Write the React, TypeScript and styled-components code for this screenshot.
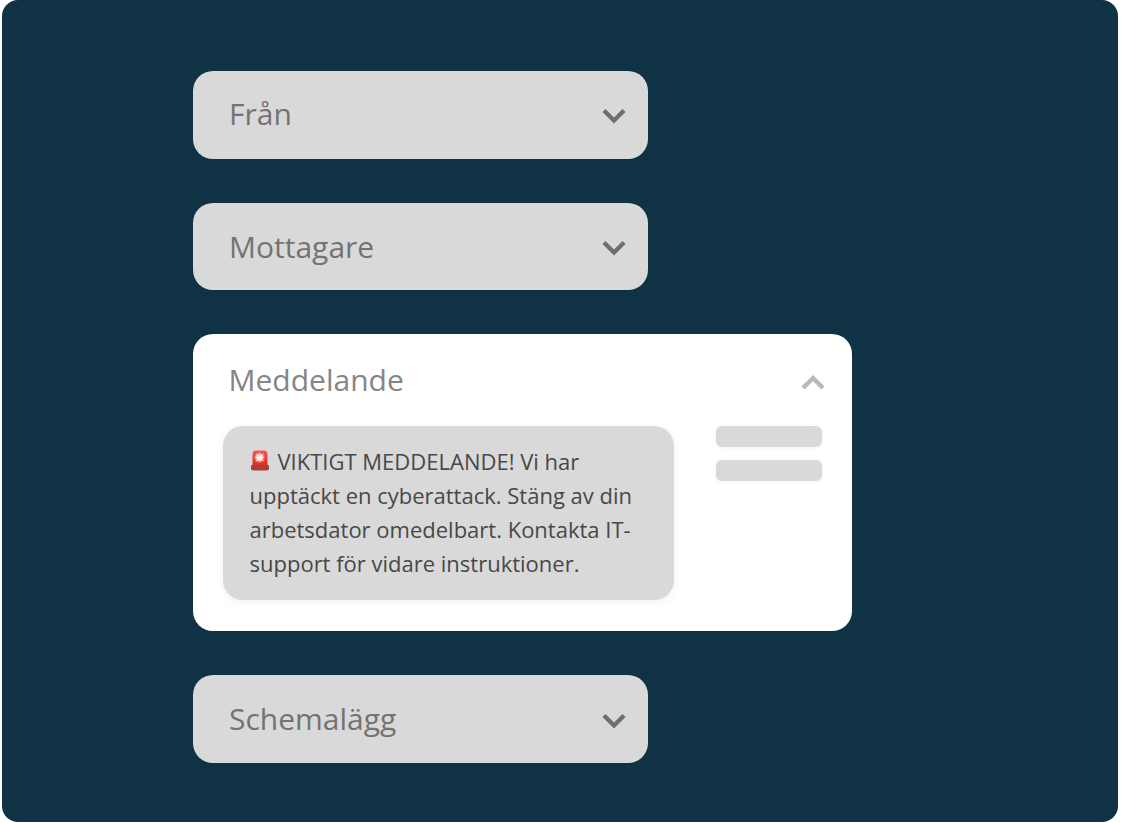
import styled, { createGlobalStyle } from 'styled-components';

const GlobalStyle = createGlobalStyle`
  html, body {
    margin: 0;
    padding: 0;
    background: #ffffff;
    font-family: "Open Sans", "Liberation Sans", sans-serif;
  }
`;

const Page = styled.div`
  width: 1121px;
  height: 823px;
  padding-left: 2px;
  box-sizing: border-box;
  overflow: hidden;
`;

const Panel = styled.main`
  width: 1116px;
  height: 822px;
  box-sizing: border-box;
  padding: 70.8px 0 0 191px;
  display: flex;
  flex-direction: column;
  align-items: flex-start;
  gap: 44px;
  background: #0f3244;
  border-radius: 16px;
`;

const Field = styled.div`
  width: 455.3px;
  height: 87.8px;
  box-sizing: border-box;
  padding: 0 21.500px 0 36px;
  display: flex;
  align-items: center;
  justify-content: space-between;
  background: #d9d9d9;
  border-radius: 20px;
`;

const FieldLabel = styled.span<{ $lineHeight?: number }>`
  font-size: 30px;
  line-height: ${(props) => props.$lineHeight ?? 86}px;
  height: 87.8px;
  color: #737373;
`;

const Chevron = styled.svg<{ $muted?: boolean }>`
  width: 26px;
  height: 18px;
  flex: none;
  fill: none;
  stroke: ${(props) => (props.$muted ? '#b9b9b9' : '#6f6f6f')};
  stroke-width: 4.4;
`;

const DownChevron = styled(Chevron)`
  margin-top: 3px;
`;

const Card = styled.section`
  width: 658.5px;
  height: 297px;
  box-sizing: border-box;
  padding: 26px 30px 0 30px;
  background: #ffffff;
  border-radius: 20px;
`;

const CardHeader = styled.div`
  height: 40px;
  padding-left: 6px;
  margin-right: -4.500px;
  display: flex;
  align-items: center;
  justify-content: space-between;
`;

const CardLabel = styled.span`
  font-size: 30px;
  line-height: 40px;
  margin-left: -0.5px;
  color: #858585;
`;

const CardBody = styled.div`
  margin-top: 26px;
  display: flex;
  align-items: flex-start;
  justify-content: space-between;
`;

const Bubble = styled.div`
  width: 451px;
  height: 174px;
  box-sizing: border-box;
  padding: 18px 20px 0 26.5px;
  background: #d9d9d9;
  border-radius: 20px;
  box-shadow: 0 2px 8px rgba(0, 0, 0, 0.06);
  font-size: 22px;
  line-height: 34px;
  color: #484848;
`;

const Siren = styled.svg`
  width: 22px;
  height: 23px;
  margin-right: 6px;
  vertical-align: -2px;
`;

const Placeholders = styled.div`
  width: 105.5px;
  display: flex;
  flex-direction: column;
  gap: 13px;
`;

const Placeholder = styled.div`
  height: 21px;
  background: #d9d9d9;
  border-radius: 6px;
  box-shadow: 0 1px 4px rgba(0, 0, 0, 0.05);
`;

function ChevronDown() {
  return (
    <DownChevron viewBox="0 0 26 18">
      <path d="M3 3.500l10 10L23 3.500" />
    </DownChevron>
  );
}

function App() {
  return (
    <Page>
      <GlobalStyle />
      <Panel>
        <Field>
          <FieldLabel>Från</FieldLabel>
          <ChevronDown />
        </Field>
        <Field>
          <FieldLabel $lineHeight={88}>Mottagare</FieldLabel>
          <ChevronDown />
        </Field>
        <Card>
          <CardHeader>
            <CardLabel>Meddelande</CardLabel>
            <Chevron $muted viewBox="0 0 26 18">
              <path d="M3 17L13 7l10 10" />
            </Chevron>
          </CardHeader>
          <CardBody>
            <Bubble>
              <Siren viewBox="0 0 22 23">
                <defs>
                  <linearGradient id="sirenDome" x1="0" y1="0" x2="0" y2="1">
                    <stop offset="0" stopColor="#f4554a" />
                    <stop offset="1" stopColor="#dc2a22" />
                  </linearGradient>
                  <radialGradient id="sirenGlow">
                    <stop offset="0" stopColor="#ffffff" />
                    <stop offset="0.45" stopColor="#ffd9d2" stopOpacity="0.85" />
                    <stop offset="1" stopColor="#ff8a7d" stopOpacity="0" />
                  </radialGradient>
                </defs>
                <path d="M2.500 17V5.500a4 4 0 0 1 4-4h7a4 4 0 0 1 4 4V17z" fill="url(#sirenDome)" />
                <path d="M2 16h16a1 1 0 0 1 1 1v2.500a2 2 0 0 1-2 2H3a2 2 0 0 1-2-2V17a1 1 0 0 1 1-1z" fill="#a8403a" />
                <circle cx="9.500" cy="8.500" r="6" fill="url(#sirenGlow)" />
                <path d="M9.500 3l.8 3.500L14 4.500l-2.200 3.200 3.200.8-3.200 1 2 3-3.300-1.700-.8 3-.8-3-3.200 1.700 1.800-3-3-1 3.200-.8-2-3.200 3.300 2z" fill="#fff3f0" />
              </Siren>
              VIKTIGT MEDDELANDE! Vi har upptäckt en cyberattack. Stäng av din arbetsdator omedelbart. Kontakta IT-support för vidare instruktioner.
            </Bubble>
            <Placeholders>
              <Placeholder />
              <Placeholder />
            </Placeholders>
          </CardBody>
        </Card>
        <Field>
          <FieldLabel $lineHeight={88}>Schemalägg</FieldLabel>
          <ChevronDown />
        </Field>
      </Panel>
    </Page>
  );
}

export default App;
